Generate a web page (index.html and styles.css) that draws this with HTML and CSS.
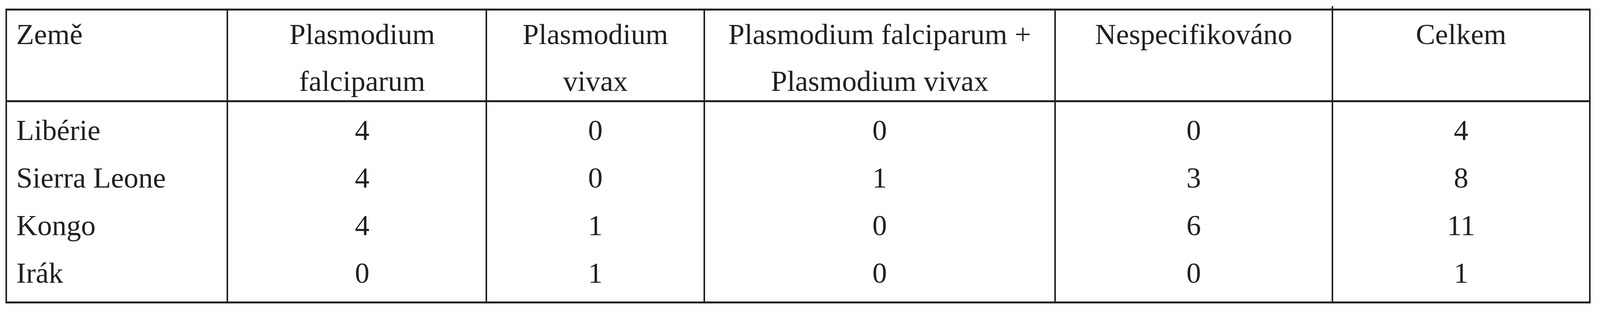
FILE: index.html
```html
<!DOCTYPE html>
<html lang="cs">
<head>
<meta charset="utf-8">
<title>Malárie podle země</title>
<link rel="stylesheet" href="styles.css">
</head>
<body>
<div class="table" role="table">
  <div class="row head" role="row">
    <div class="cell c1" role="columnheader">Země</div>
    <div class="cell c2" role="columnheader">Plasmodium<br>falciparum</div>
    <div class="cell c3" role="columnheader">Plasmodium<br>vivax</div>
    <div class="cell c4" role="columnheader">Plasmodium falciparum +<br>Plasmodium vivax</div>
    <div class="cell c5" role="columnheader">Nespecifikováno</div>
    <div class="cell c6 tick" role="columnheader">Celkem</div>
  </div>
  <div class="row first" role="row">
    <div class="cell c1" role="cell">Libérie</div>
    <div class="cell c2" role="cell">4</div>
    <div class="cell c3" role="cell">0</div>
    <div class="cell c4" role="cell">0</div>
    <div class="cell c5" role="cell">0</div>
    <div class="cell c6" role="cell">4</div>
  </div>
  <div class="row" role="row">
    <div class="cell c1" role="cell">Sierra Leone</div>
    <div class="cell c2" role="cell">4</div>
    <div class="cell c3" role="cell">0</div>
    <div class="cell c4" role="cell">1</div>
    <div class="cell c5" role="cell">3</div>
    <div class="cell c6" role="cell">8</div>
  </div>
  <div class="row" role="row">
    <div class="cell c1" role="cell">Kongo</div>
    <div class="cell c2" role="cell">4</div>
    <div class="cell c3" role="cell">1</div>
    <div class="cell c4" role="cell">0</div>
    <div class="cell c5" role="cell">6</div>
    <div class="cell c6" role="cell">11</div>
  </div>
  <div class="row last" role="row">
    <div class="cell c1" role="cell">Irák</div>
    <div class="cell c2" role="cell">0</div>
    <div class="cell c3" role="cell">1</div>
    <div class="cell c4" role="cell">0</div>
    <div class="cell c5" role="cell">0</div>
    <div class="cell c6" role="cell">1</div>
  </div>
</div>
</body>
</html>
```
FILE: styles.css
```css
:root {
  /* one pixel of the 4871 x 800 reference, horizontally and vertically */
  --ux: calc(100vw / 4871);
  --uy: calc(100vh / 800);
  --line: #231f20;
}

html, body {
  margin: 0;
  padding: 0;
  background: #ffffff;
  overflow: hidden;
}

body {
  font-family: "Liberation Serif", "Times New Roman", serif;
  font-size: calc(40.5 * var(--ux) + 40.5 * var(--uy));
  color: #231f20;
}

.table {
  display: grid;
  grid-template-columns:
    calc(668 * var(--ux))
    calc(789 * var(--ux))
    calc(663 * var(--ux))
    calc(1068 * var(--ux))
    calc(844 * var(--ux))
    calc(784 * var(--ux));
  width: max-content;
  margin: calc(22 * var(--uy)) 0 0 calc(17 * var(--ux));
  border-style: solid;
  border-color: var(--line);
  border-width: calc(5 * var(--uy)) calc(5 * var(--ux));
}

.row {
  display: contents;
}

.cell {
  box-sizing: border-box;
  border-left: calc(5 * var(--ux)) solid var(--line);
  text-align: center;
  line-height: calc(122 * var(--uy));
  white-space: nowrap;
}

.cell.c1 {
  border-left: 0;
  text-align: left;
  padding-left: calc(28 * var(--ux));
}

.cell.c2 {
  padding-left: calc(32 * var(--ux));
}

.head .cell {
  height: calc(235 * var(--uy));
  line-height: calc(120 * var(--uy));
  padding-top: calc(1 * var(--uy));
  border-bottom: calc(5 * var(--uy)) solid var(--line);
}

.first .cell {
  padding-top: calc(11 * var(--uy));
}

.last .cell {
  padding-bottom: calc(12 * var(--uy));
}

.tick {
  position: relative;
}

.tick::before {
  content: "";
  position: absolute;
  left: calc(-5 * var(--ux));
  top: calc(-11 * var(--uy));
  width: calc(5 * var(--ux));
  height: calc(6 * var(--uy));
  background: var(--line);
}
```
